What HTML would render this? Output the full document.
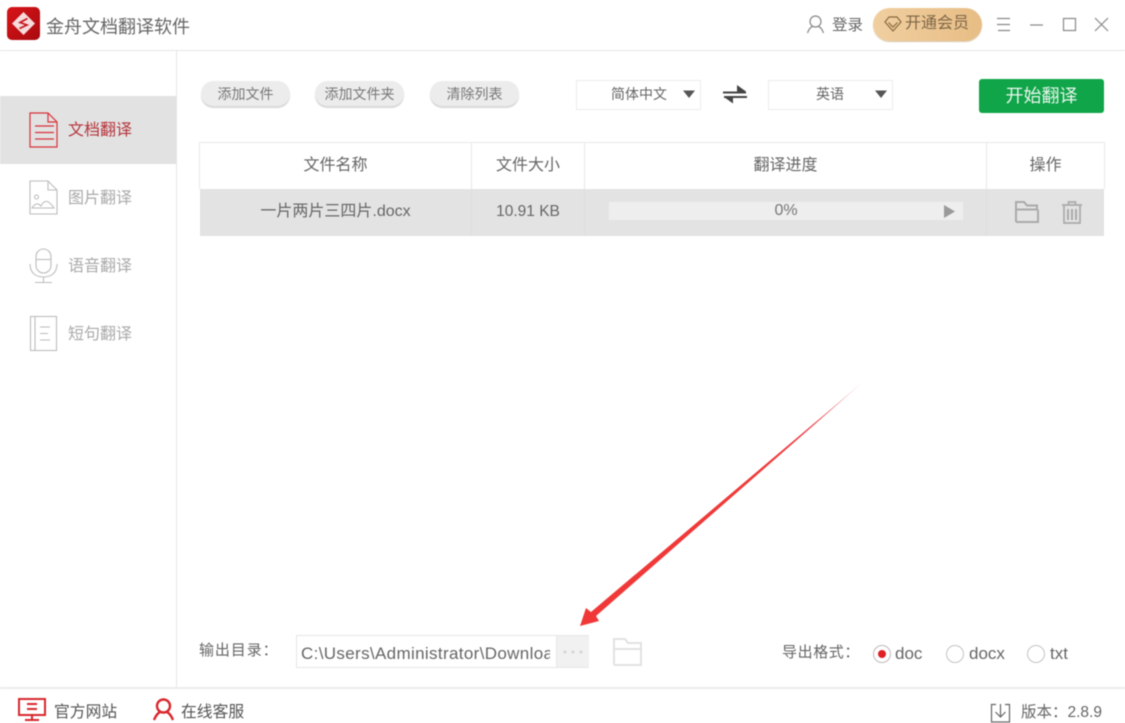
<!DOCTYPE html>
<html lang="zh">
<head>
<meta charset="utf-8">
<title>金舟文档翻译软件</title>
<style>
html,body{margin:0;padding:0;background:#fff;}
#app{position:relative;width:1125px;height:723px;overflow:hidden;background:#fff;font-family:"Liberation Sans","Noto Sans CJK SC",sans-serif;color:#666;filter:blur(.45px);}
.a{position:absolute;}
.t{position:absolute;white-space:nowrap;line-height:20px;height:20px;}
.c{text-align:center;}
.btn{position:absolute;top:81px;height:25px;border-radius:13px;background:#ececec;box-shadow:0 2px 1px #d8d8d8;font-size:14px;line-height:26px;text-align:center;color:#777;}
.sel{position:absolute;top:80px;height:28px;width:123px;border:1px solid #ececec;box-sizing:content-box;background:#fff;}
svg{position:absolute;overflow:visible;}
</style>
</head>
<body>
<div id="app">
  <!-- lines -->
  <div class="a" style="left:0;top:50px;width:1125px;height:1px;background:#e6e6e6"></div>
  <div class="a" style="left:176px;top:51px;width:1px;height:636px;background:#e6e6e6"></div>
  <div class="a" style="left:0;top:687px;width:1125px;height:2px;background:#ececec"></div>

  <!-- logo -->
  <svg style="left:7px;top:7px" width="34" height="34" viewBox="0 0 34 34">
    <defs><linearGradient id="lg" x1="0" y1="0" x2="1" y2="1"><stop offset="0" stop-color="#d8141a"/><stop offset="1" stop-color="#a80a0e"/></linearGradient></defs>
    <rect width="33" height="33" rx="5" fill="url(#lg)"/>
    <path d="M16.500 5 L28 16.500 L16.500 28 L5 16.500Z" fill="#f6dcdc"/>
    <path d="M20.500 11.500 L13 15.500 L20 18 L12.500 21.500" fill="none" stroke="#c4161b" stroke-width="1.700"/>
  </svg>
  <div class="t" style="left:46px;top:17px;font-size:18px;color:#666">金舟文档翻译软件</div>

  <!-- header right -->
  <svg style="left:806px;top:14px" width="20" height="20" viewBox="0 0 20 20" fill="none" stroke="#888" stroke-width="1.200">
    <circle cx="9.500" cy="7.500" r="5.500"/>
    <path d="M1.500 19 C3 14.500 5 13 6.500 12.500 M17.500 19 C16 14.500 14 13 12.500 12.500"/>
  </svg>
  <div class="t" style="left:832px;top:16px;font-size:15.500px;color:#666">登录</div>
  <div class="a" style="left:873px;top:8px;width:109px;height:33px;border-radius:17px;background:linear-gradient(90deg,#f0cfa0,#e8bd85);box-shadow:0 1px 1px #d8c6ac"></div>
  <svg style="left:884px;top:15px" width="18" height="18" viewBox="0 0 18 18" fill="none" stroke="#8a6a3e" stroke-width="1.200">
    <path d="M5 2 H13 L17 7 L9 16 L1 7Z"/><path d="M4.500 7.500 L9 12 L13.500 7.500"/>
  </svg>
  <div class="t" style="left:905px;top:14px;font-size:16px;color:#7d6647">开通会员</div>
  <svg style="left:996px;top:16px" width="116" height="18" viewBox="0 0 116 18" fill="none" stroke="#888" stroke-width="1.200">
    <path d="M1 2.500 H14 M1 8.500 H14 M2 14.500 H14"/>
    <path d="M34 9 H47"/>
    <rect x="67.500" y="2.500" width="12" height="12"/>
    <path d="M99 2 L112 15 M112 2 L99 15"/>
  </svg>

  <!-- sidebar -->
  <div class="a" style="left:0;top:96px;width:176px;height:68px;background:#e2e2e2"></div>
  <svg style="left:29px;top:112px" width="30" height="36" viewBox="0 0 30 36" fill="none" stroke="#d8333a" stroke-width="1.200">
    <path d="M1 1 H19 L28 10 V35 H1Z"/><path d="M19 1 V10 H28" /><path d="M6 14 H25 M6 20.500 H25 M6 27 H25"/>
  </svg>
  <div class="t" style="left:68px;top:121px;font-size:16px;color:#b5353b">文档翻译</div>

  <svg style="left:29px;top:180px" width="30" height="36" viewBox="0 0 30 36" fill="none" stroke="#bdbdbd" stroke-width="1.100">
    <path d="M1 1 H19 L28 10 V34 H1Z"/><path d="M19 1 V10 H28"/>
    <circle cx="7.500" cy="17" r="2"/><path d="M3 28 C6 23 9 23 12 26 C15 20 19 19 25 28 H3Z"/>
  </svg>
  <div class="t" style="left:68px;top:189px;font-size:16px;color:#aaa">图片翻译</div>

  <svg style="left:29px;top:248px" width="30" height="36" viewBox="0 0 30 36" fill="none" stroke="#bdbdbd" stroke-width="1.100">
    <rect x="7" y="1" width="15" height="24" rx="7.500"/><path d="M7 11.500 H22"/>
    <path d="M1 16 C1 25 7 29 14.500 29 C22 29 28 25 28 16"/><path d="M14.500 29 V34 M6 34.500 H23"/>
  </svg>
  <div class="t" style="left:68px;top:257px;font-size:16px;color:#aaa">语音翻译</div>

  <svg style="left:29px;top:316px" width="30" height="36" viewBox="0 0 30 36" fill="none" stroke="#bdbdbd" stroke-width="1.100">
    <rect x="1.500" y="0.500" width="26" height="34"/><path d="M6 0.500 V34.500"/><path d="M11 11 H21 M11 17.500 H19 M11 24 H21"/>
  </svg>
  <div class="t" style="left:68px;top:325px;font-size:16px;color:#aaa">短句翻译</div>

  <!-- toolbar -->
  <div class="btn" style="left:201px;width:89px">添加文件</div>
  <div class="btn" style="left:315px;width:89px">添加文件夹</div>
  <div class="btn" style="left:430px;width:89px">清除列表</div>

  <div class="sel" style="left:576px"></div>
  <div class="t" style="left:611px;top:84px;font-size:14px;color:#666">简体中文</div>
  <svg style="left:683px;top:90px" width="13" height="9" viewBox="0 0 13 9"><path d="M0 0.500 H12 L6 8Z" fill="#555"/></svg>
  <svg style="left:723px;top:84px" width="24" height="21" viewBox="0 0 24 21" fill="#444">
    <path d="M0 7.500 H23 V9.500 H0Z"/><path d="M14 1 L23 7.500 H14Z"/>
    <path d="M1 12 H24 V14 H1Z"/><path d="M10 13 V19.500 L1 13Z"/>
  </svg>
  <div class="sel" style="left:768px"></div>
  <div class="t" style="left:816px;top:84px;font-size:14px;color:#666">英语</div>
  <svg style="left:875px;top:90px" width="13" height="9" viewBox="0 0 13 9"><path d="M0 0.500 H12 L6 8Z" fill="#555"/></svg>
  <div class="a c" style="left:979px;top:79px;width:125px;height:34px;border-radius:3px;background:#0fa548;color:#e9f6ee;font-size:18px;line-height:35px">开始翻译</div>

  <!-- table -->
  <div class="a" style="left:199px;top:142px;width:906px;height:1px;background:#e8e8e8"></div>
  <div class="a" style="left:199px;top:142px;width:1px;height:47px;background:#e8e8e8"></div>
  <div class="a" style="left:1104px;top:142px;width:1px;height:47px;background:#e8e8e8"></div>
  <div class="a" style="left:471px;top:142px;width:1px;height:47px;background:#e8e8e8"></div>
  <div class="a" style="left:584px;top:142px;width:1px;height:47px;background:#e8e8e8"></div>
  <div class="a" style="left:986px;top:142px;width:1px;height:47px;background:#e8e8e8"></div>
  <div class="t c" style="left:200px;top:156px;width:271px;font-size:16px;color:#666">文件名称</div>
  <div class="t c" style="left:472px;top:156px;width:112px;font-size:16px;color:#666">文件大小</div>
  <div class="t c" style="left:585px;top:156px;width:401px;font-size:16px;color:#666">翻译进度</div>
  <div class="t c" style="left:987px;top:156px;width:117px;font-size:16px;color:#666">操作</div>

  <div class="a" style="left:200px;top:189px;width:904px;height:47px;background:#e3e3e3"></div>
  <div class="a" style="left:471px;top:189px;width:1px;height:47px;background:#dedede"></div>
  <div class="a" style="left:584px;top:189px;width:1px;height:47px;background:#dedede"></div>
  <div class="a" style="left:986px;top:189px;width:1px;height:47px;background:#dedede"></div>
  <div class="t c" style="left:200px;top:202px;width:271px;font-size:16px;color:#666">一片两片三四片.docx</div>
  <div class="t c" style="left:472px;top:202px;width:112px;font-size:15.500px;color:#666">10.91 KB</div>
  <div class="a" style="left:609px;top:202px;width:354px;height:18px;background:#eeeeee"></div>
  <div class="t c" style="left:609px;top:201px;width:354px;font-size:16px;color:#777">0%</div>
  <svg style="left:944px;top:205px" width="12" height="13" viewBox="0 0 12 13"><path d="M0 0 L11 6.500 L0 13Z" fill="#9a9a9a"/></svg>
  <svg style="left:1015px;top:200px" width="24" height="24" viewBox="0 0 24 24" fill="none" stroke="#aaa" stroke-width="2">
    <path d="M1 22 V2 H9 L12 5.500 H22 V9.500 H1"/><path d="M1 22 H23 V9.500"/>
  </svg>
  <svg style="left:1061px;top:201px" width="22" height="23" viewBox="0 0 22 23" fill="none" stroke="#aaa" stroke-width="1.700">
    <path d="M1 4 H21 M7.500 3.500 V1 H14.500 V3.500"/><path d="M3 4.500 V22 H19 V4.500"/><path d="M7 8 V19 M11 8 V19 M15 8 V19" stroke-width="2"/>
  </svg>

  <!-- output row -->
  <div class="t" style="left:199px;top:641px;font-size:15px;color:#666;letter-spacing:.9px">输出目录：</div>
  <div class="a" style="left:296px;top:635px;width:293px;height:33px;border:1px solid #e6e6e6;box-sizing:border-box;background:#fff"></div>
  <div class="t" style="left:301px;top:644px;width:249px;overflow:hidden;font-size:17px;letter-spacing:.35px;color:#666">C:\Users\Administrator\Downloads</div>
  <div class="a" style="left:556px;top:636px;width:33px;height:31px;background:#f1f1f1;border-left:1px solid #e8e8e8;box-sizing:border-box"></div>
  <svg style="left:562px;top:650px" width="22" height="4" viewBox="0 0 22 4" fill="#d4d4d4"><circle cx="3" cy="2" r="1.500"/><circle cx="11" cy="2" r="1.500"/><circle cx="19" cy="2" r="1.500"/></svg>
  <svg style="left:612px;top:637px" width="31" height="30" viewBox="0 0 31 30" fill="none" stroke="#e2e2e2" stroke-width="2">
    <path d="M2 28 V2 H13 L16 6 H29 V12 H2"/><path d="M2 28 H29 V12"/>
  </svg>

  <!-- format -->
  <div class="t" style="left:782px;top:643px;font-size:15px;color:#666;letter-spacing:.6px">导出格式：</div>
  <div class="a" style="left:873px;top:645px;width:18px;height:18px;border:1px solid #bbb;border-radius:50%;box-sizing:border-box"></div>
  <div class="a" style="left:878px;top:650px;width:8px;height:8px;background:#e02025;border-radius:50%"></div>
  <div class="t" style="left:895px;top:644px;font-size:17px;color:#666">doc</div>
  <div class="a" style="left:946px;top:645px;width:18px;height:18px;border:1px solid #c4c4c4;border-radius:50%;box-sizing:border-box"></div>
  <div class="t" style="left:969px;top:644px;font-size:17px;color:#666">docx</div>
  <div class="a" style="left:1027px;top:645px;width:18px;height:18px;border:1px solid #c4c4c4;border-radius:50%;box-sizing:border-box"></div>
  <div class="t" style="left:1050px;top:644px;font-size:17px;color:#666">txt</div>

  <!-- footer -->
  <svg style="left:18px;top:698px" width="30" height="25" viewBox="0 0 30 25" fill="none" stroke="#d8282e" stroke-width="2">
    <rect x="1" y="1" width="26" height="16"/><path d="M9 6 H19 M9 11 H19 M14 17 V21 M7 22 H21"/>
  </svg>
  <div class="t" style="left:54px;top:703px;font-size:15.800px;color:#555">官方网站</div>
  <svg style="left:152px;top:698px" width="24" height="24" viewBox="0 0 24 24" fill="none" stroke="#d8282e" stroke-width="2.400">
    <circle cx="11.500" cy="8" r="6.500"/><path d="M2 22 C4 17 6 15 8 14 M21 22 C19 17 17 15 15 14"/>
  </svg>
  <div class="t" style="left:181px;top:703px;font-size:15.800px;color:#555">在线客服</div>
  <svg style="left:990px;top:703px" width="21" height="20" viewBox="0 0 21 20" fill="none" stroke="#666" stroke-width="1.200">
    <path d="M6 1.500 H1.500 V19 H19.500 V1.500 H15"/><path d="M10.500 1 V14 M5.500 9 L10.500 14 L15.500 9"/>
  </svg>
  <div class="t" style="left:1021px;top:703px;font-size:15.500px;color:#666">版本：2.8.9</div>

  <!-- arrow -->
  <svg style="left:0;top:0" width="1125" height="723" viewBox="0 0 1125 723">
    <defs><linearGradient id="ar" gradientUnits="userSpaceOnUse" x1="863" y1="382" x2="780" y2="455"><stop offset="0" stop-color="#f4c4c4"/><stop offset=".6" stop-color="#e8404a"/><stop offset="1" stop-color="#f03838"/></linearGradient></defs>
    <path d="M863 382 L596 616 L599 621 L580 626 L586 608 L591 612Z" fill="url(#ar)"/>
  </svg>
</div>
</body>
</html>
